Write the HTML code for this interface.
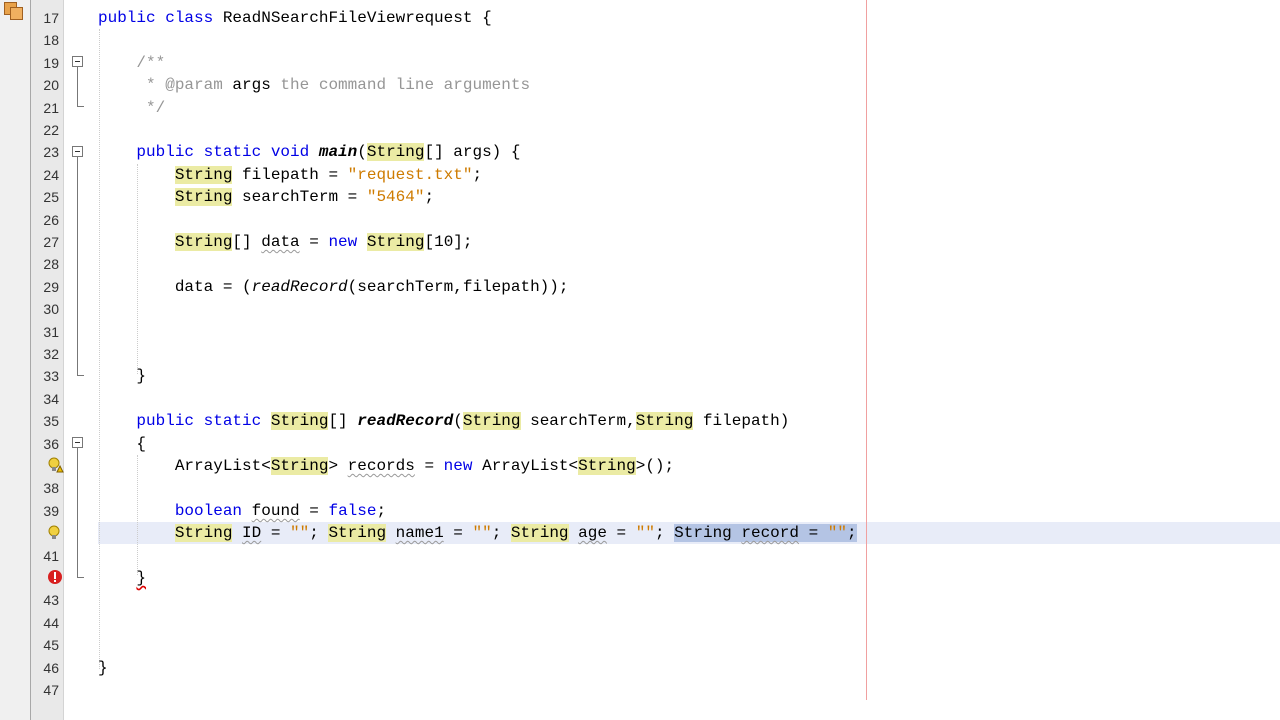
<!DOCTYPE html>
<html><head><meta charset="utf-8"><style>
*{margin:0;padding:0}
body{width:1280px;height:720px;overflow:hidden;background:#fff;position:relative;font-family:"Liberation Mono",monospace}
#strip{position:absolute;left:0;top:0;width:30px;height:720px;background:#f0f0f0;border-right:1px solid #a8a8a8}
#gut{position:absolute;left:31px;top:0;width:32px;height:720px;background:#e9e9e9;border-right:1px solid #d4d4d4}
.ln{position:absolute;left:31px;width:28px;text-align:right;font:14px "Liberation Sans",sans-serif;color:#333;height:22px;line-height:22px}
.row{position:absolute;left:98px;height:22px;line-height:22px;font-size:16px;white-space:pre;color:#000}
.k{color:#0000e6}.s{color:#ce7b00}.c{color:#969696}
.y{background:#ebeba4}
.b{font-weight:bold;font-style:italic}.i{font-style:italic}
.w{text-decoration:underline wavy #999;text-decoration-thickness:1px;text-underline-offset:3px}
.sel{background:#b4c4e4}
.fold{position:absolute;left:72px;width:11px;height:11px;border:1px solid #777;background:#fff;box-sizing:border-box}
.fold:after{content:"";position:absolute;left:2px;top:4px;width:5px;height:1px;background:#333}
.vl{position:absolute;left:77px;width:1px;background:#777}
.hl{position:absolute;left:77px;width:7px;height:1px;background:#777}
.guide{position:absolute;width:0;border-left:1px dotted #ccc}
</style></head><body>
<div id="strip"></div>
<div id="gut"></div>
<div style="position:absolute;left:4px;top:2px;width:11px;height:11px;background:#e8a24a;border:1px solid #a06020"></div>
<div style="position:absolute;left:10px;top:7px;width:11px;height:11px;background:#f0b060;border:1px solid #a06020"></div>
<div style="position:absolute;left:98px;top:522px;width:1182px;height:22px;background:#e8ecf8"></div>
<div style="position:absolute;left:866px;top:0;width:1px;height:700px;background:#f0a0a0"></div>
<div class="guide" style="left:99px;top:29px;height:640px"></div>
<div class="guide" style="left:137px;top:164px;height:210px"></div>
<div class="guide" style="left:137px;top:455px;height:120px"></div>

<div class="ln" style="top:7px">17</div><div class="ln" style="top:29px">18</div><div class="ln" style="top:52px">19</div><div class="ln" style="top:74px">20</div><div class="ln" style="top:97px">21</div><div class="ln" style="top:119px">22</div><div class="ln" style="top:141px">23</div><div class="ln" style="top:164px">24</div><div class="ln" style="top:186px">25</div><div class="ln" style="top:209px">26</div><div class="ln" style="top:231px">27</div><div class="ln" style="top:253px">28</div><div class="ln" style="top:276px">29</div><div class="ln" style="top:298px">30</div><div class="ln" style="top:321px">31</div><div class="ln" style="top:343px">32</div><div class="ln" style="top:365px">33</div><div class="ln" style="top:388px">34</div><div class="ln" style="top:410px">35</div><div class="ln" style="top:433px">36</div><div class="ln" style="top:477px">38</div><div class="ln" style="top:500px">39</div><div class="ln" style="top:545px">41</div><div class="ln" style="top:589px">43</div><div class="ln" style="top:612px">44</div><div class="ln" style="top:634px">45</div><div class="ln" style="top:657px">46</div><div class="ln" style="top:679px">47</div>

<svg style="position:absolute;left:46px;top:456px" width="18" height="18"><circle cx="8" cy="7" r="5" fill="#f0d040" stroke="#a08000"/><rect x="6" y="11" width="4" height="4" fill="#888"/><path d="M11 16 L14 10 L17 16Z" fill="#f0c000" stroke="#806000"/></svg>
<svg style="position:absolute;left:46px;top:524px" width="18" height="18"><circle cx="8" cy="7" r="5" fill="#f0d040" stroke="#a08000"/><rect x="6" y="11" width="4" height="4" fill="#888"/></svg>
<svg style="position:absolute;left:47px;top:569px" width="16" height="16"><circle cx="8" cy="8" r="7" fill="#d82020"/><rect x="7" y="3" width="2" height="7" fill="#fff"/><rect x="7" y="11" width="2" height="2" fill="#fff"/></svg>

<div class="fold" style="top:56px"></div><div class="vl" style="top:67px;height:40px"></div><div class="hl" style="top:106px"></div>
<div class="fold" style="top:146px"></div><div class="vl" style="top:157px;height:218px"></div><div class="hl" style="top:375px"></div>
<div class="fold" style="top:437px"></div><div class="vl" style="top:448px;height:129px"></div><div class="hl" style="top:577px"></div>

<div class="row" style="top:7px"><span class="k">public class</span> ReadNSearchFileViewrequest {</div>
<div class="row c" style="top:52px">    /**</div>
<div class="row" style="top:74px"><span class="c">     * @param </span>args<span class="c"> the command line arguments</span></div>
<div class="row c" style="top:97px">     */</div>
<div class="row" style="top:141px">    <span class="k">public static void</span> <span class="b">main</span>(<span class="y">String</span>[] args) {</div>
<div class="row" style="top:164px">        <span class="y">String</span> filepath = <span class="s">"request.txt"</span>;</div>
<div class="row" style="top:186px">        <span class="y">String</span> searchTerm = <span class="s">"5464"</span>;</div>
<div class="row" style="top:231px">        <span class="y">String</span>[] <span class="w">data</span> = <span class="k">new</span> <span class="y">String</span>[10];</div>
<div class="row" style="top:276px">        data = (<span class="i">readRecord</span>(searchTerm,filepath));</div>
<div class="row" style="top:365px">    }</div>
<div class="row" style="top:410px">    <span class="k">public static</span> <span class="y">String</span>[] <span class="b">readRecord</span>(<span class="y">String</span> searchTerm,<span class="y">String</span> filepath)</div>
<div class="row" style="top:433px">    {</div>
<div class="row" style="top:455px">        ArrayList&lt;<span class="y">String</span>&gt; <span class="w">records</span> = <span class="k">new</span> ArrayList&lt;<span class="y">String</span>&gt;();</div>
<div class="row" style="top:500px">        <span class="k">boolean</span> <span class="w">found</span> = <span class="k">false</span>;</div>
<div class="row" style="top:522px">        <span class="y">String</span> <span class="w">ID</span> = <span class="s">""</span>; <span class="y">String</span> <span class="w">name1</span> = <span class="s">""</span>; <span class="y">String</span> <span class="w">age</span> = <span class="s">""</span>; <span class="sel">String <span class="w">record</span> = <span class="s">""</span>;</span></div>
<div class="row" style="top:567px">    <span style="text-decoration:underline wavy #d00;text-underline-offset:3px">}</span></div>
<div class="row" style="top:657px">}</div>
</body></html>
